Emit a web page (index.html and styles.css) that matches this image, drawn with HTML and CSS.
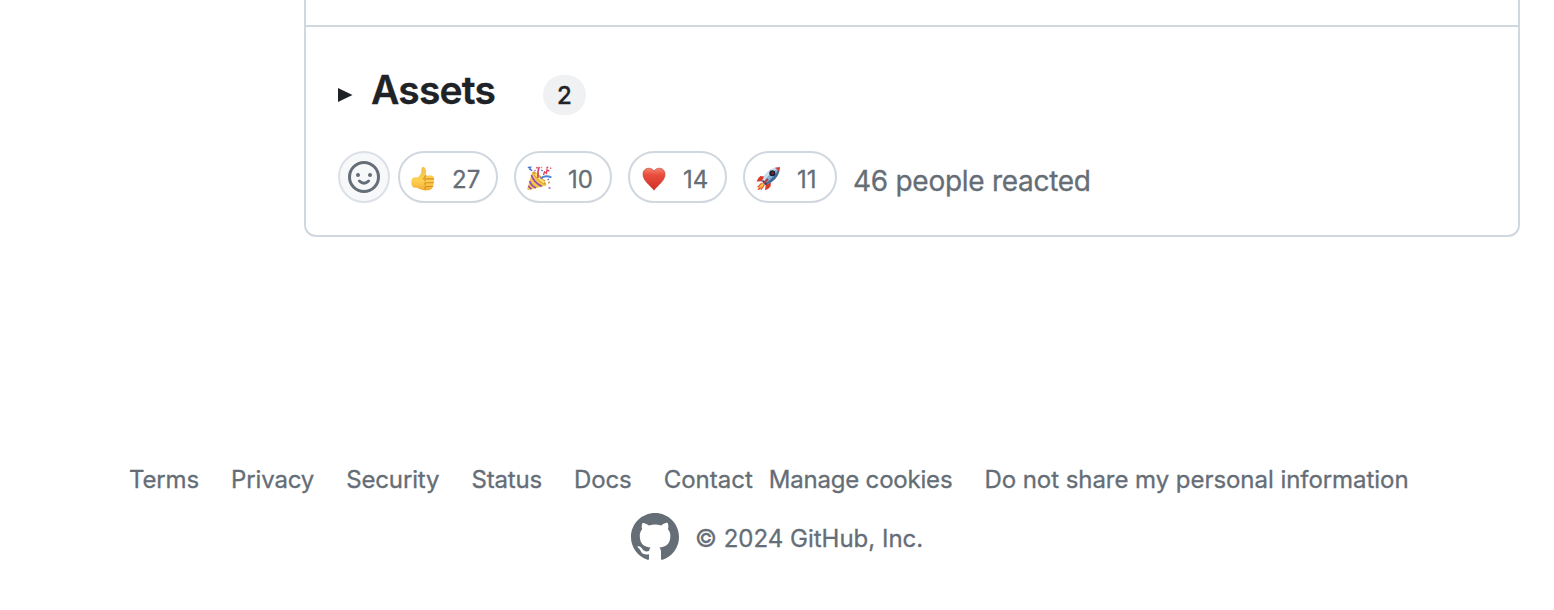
FILE: index.html
```html
<!DOCTYPE html>
<html lang="en">
<head>
<meta charset="utf-8">
<title>Release</title>
<link rel="stylesheet" href="styles.css">
</head>
<body>
<main class="release">
  <div class="release-body"></div>
  <section class="release-footer">
    <div class="assets">
      <svg class="marker" width="15" height="14" viewBox="0 0 15 14"><path d="M0 0v14l14.500-7z" fill="#1f2328"/></svg>
      <h3 class="assets-title">Assets</h3>
      <span class="counter">2</span>
    </div>
    <div class="reactions">
      <button class="add-reaction" aria-label="Add reaction">
        <svg width="32" height="32" viewBox="0 0 16 16" fill="#656d76"><path fill-rule="evenodd" d="M8 0a8 8 0 1 1 0 16A8 8 0 0 1 8 0ZM1.500 8a6.500 6.500 0 1 0 13 0 6.500 6.500 0 0 0-13 0Z"/><circle cx="5" cy="7" r="1"/><circle cx="11" cy="7" r="1"/><path d="M5.700 10Q8 12.200 10.300 10" fill="none" stroke="#656d76" stroke-width="1.450" stroke-linecap="round"/></svg>
      </button>
      <button class="reaction thumbs">
        <svg width="24" height="26" viewBox="0 0 24 26">
          <defs><linearGradient id="hand" x2="0" y2="1"><stop stop-color="#f5c04d"/><stop offset=".6" stop-color="#fed050"/><stop offset="1" stop-color="#efad35"/></linearGradient></defs>
          <path d="M.4 14.500Q.8 12 3 11.600L7 11.200C9 9.500 10.600 7.600 10.300 4.500C10 1.600 11.200.5 12.600 1C15.300 2 15.800 5.800 14.700 9.600H20.700Q23 10 22.700 12.500Q23.400 14.500 22.600 16.500Q22.900 19 21.700 20.200Q22 22.500 20 23.600Q17.500 25 11.500 24Q8 23.200 6 21.800L2.500 21.500Q0 20 .4 14.500Z" fill="url(#hand)"/>
          <path d="M14.700 9.600L12.500 13M22.700 12.900H15.300Q13 13 14.200 15M22.500 16.800H15Q13 17 14.200 18.800M21.800 20.500H15Q13.200 20.800 14.400 23.500" fill="none" stroke="#d98c25" stroke-width="1.100" stroke-linecap="round"/>
        </svg><span>27</span>
      </button>
      <button class="reaction party">
        <svg width="25" height="25" viewBox="0 0 25 25">
          <path d="M6.200 5.300Q15.500 9 19.200 18.500Q19.500 20.500 16.500 20.300L1.600 24Q-.1 24.300.4 22.300L5 6.500Z" fill="#f3c34b"/>
          <path d="M6.200 5.300Q15.500 9 19.200 18.500Q16 18.500 10.500 13.500Q5.800 9 6.200 5.300Z" fill="#d7962d"/>
          <path d="M8.500 7.500Q10.500 12 17.500 16.500" stroke="#f9df72" stroke-width="2.600" fill="none"/>
          <path d="M4.400 9Q6.500 16 14.700 20.500M2.600 15Q4 19.500 9 22M1.200 20L4.500 23.300" fill="none" stroke="#944bb4" stroke-width="1.600"/>
          <path d="M11 12Q10.500 5 12.300 1" fill="none" stroke="#d6436c" stroke-width="1.700"/>
          <path d="M13.500 12.500Q18 8.500 24.500 11.500" fill="none" stroke="#4c82df" stroke-width="1.900"/>
          <path d="M.8 1.500L3.700 1.200L2.800 3.200L5.200 4.700M14.200 4l1.600 1M20.500 14l1.500-1" fill="none" stroke="#4e78cc" stroke-width="1.400"/>
          <path d="M16.500 9L17.500 5.800L19.300 7.200L20 4L22.300 5M19.500 2.500L21 .7M23 1.800l1.300.7M9.200 1.500l1.500.5" fill="none" stroke="#df4560" stroke-width="1.400"/>
          <path d="M21 17l2-1M17 14l1 1M14 1l1 1" stroke="#dda042" stroke-width="1.600"/><path d="M21.500 21.500l2 1M7.500 4l1 1" stroke="#b86acb" stroke-width="1.600"/>
        </svg><span>10</span>
      </button>
      <button class="reaction heart">
        <svg width="24" height="24" viewBox="0 0 24 24"><defs><linearGradient id="heart" x2="0" y2="1"><stop stop-color="#f5866f"/><stop offset=".3" stop-color="#e94e3d"/><stop offset="1" stop-color="#d32f27"/></linearGradient></defs><path d="M12 4.300C10-.3 1-.1 1 7.300C1 14 8 18 12 23.200C16 18 23 14 23 7.300C23-.1 14-.3 12 4.300Z" fill="url(#heart)" stroke="#c4372d" stroke-width=".6"/></svg><span>14</span>
      </button>
      <button class="reaction rocket">
        <svg width="25" height="25" viewBox="0 0 25 25">
          <path d="M9 10.500L4.500 10Q1.500 12 .5 15.500L6.500 15.200ZM15 16.500L14.500 20.500Q12.500 23.300 9 24.300L9.800 18Z" fill="#dd3b29"/>
          <path d="M5.500 16.500L.5 21.500L3 21L1.500 24.300L4.800 23L5 24.500L9 19Z" fill="#f04c2d"/><path d="M6 17L2.500 21.500L4.500 21.200L4.500 23L8 19Z" fill="#fbc53d"/>
          <path d="M23.700 1Q13.500 1.800 8.700 9.600L5.600 15.500L9.200 19.100L15.300 16.300Q23.500 11 23.700 1Z" fill="#86b3d7"/>
          <path d="M23.700 1Q13.500 1.800 8.700 9.600L5.600 15.500L7 17Q12 8 23.700 1Z" fill="#cde0ef"/>
          <path d="M23.700 1Q23.500 11 15.300 16.300L9.200 19.100L8 17.900Q18 13 23.700 1Z" fill="#426996"/>
          <path d="M18.500 1.900Q22 2.500 23 6.400L23.700 1Z" fill="#d7392e"/><circle cx="16.300" cy="7.200" r="3" fill="#171d2c"/><circle cx="16.500" cy="7" r="1.500" fill="#7c2630"/>
          <path d="M6.400 14.500L10.500 18.500" stroke="#303d5a" stroke-width="1.500"/><path d="M7.500 17.400L12 13" stroke="#bd3634" stroke-width="2"/>
        </svg><span>11</span>
      </button>
      <span class="reacted">46 people reacted</span>
    </div>
  </section>
</main>
<footer class="footer">
  <nav class="links">
    <a>Terms</a><a>Privacy</a><a>Security</a><a>Status</a><a>Docs</a><a class="contact">Contact</a><a class="cookies">Manage cookies</a><a class="personal">Do not share my personal information</a>
  </nav>
  <div class="copyright">
    <svg width="48" height="48" viewBox="0 0 16 16" fill="#656d76"><path d="M8 0c4.420 0 8 3.580 8 8a8.013 8.013 0 0 1-5.450 7.590c-.400.080-.550-.170-.550-.380 0-.270.010-1.130.010-2.200 0-.750-.250-1.230-.540-1.480 1.780-.200 3.650-.880 3.650-3.950 0-.880-.310-1.590-.820-2.150.080-.200.360-1.020-.080-2.120 0 0-.670-.220-2.200.820-.640-.180-1.320-.270-2-.270-.680 0-1.360.090-2 .270-1.530-1.030-2.200-.820-2.200-.820-.440 1.100-.160 1.920-.080 2.120-.510.560-.820 1.280-.820 2.150 0 3.060 1.860 3.750 3.640 3.950-.230.200-.440.550-.510 1.070-.460.210-1.610.550-2.330-.660-.150-.240-.600-.830-1.230-.820-.670.010-.270.380.010.530.340.190.730.900.820 1.130.160.450.680 1.310 2.690.940 0 .670.010 1.300.010 1.490 0 .210-.150.450-.550.380A7.995 7.995 0 0 1 0 8c0-4.420 3.580-8 8-8Z"/></svg>
    <span>© 2024 GitHub, Inc.</span>
  </div>
</footer>
</body>
</html>
```
FILE: styles.css
```css
* { box-sizing: border-box; }
body { margin: 0; height: 610px; overflow: hidden; background: #fff; color: #656d76; font-family: Inter, sans-serif; font-size: 24px; -webkit-text-stroke: .3px currentColor; }
.release { width: 1216px; height: 237px; margin-left: 304px; border: 2px solid #d0d7de; border-top: 0; border-radius: 0 0 12px 12px; }
.release-body { height: 27px; border-bottom: 2px solid #d0d7de; }
.release-footer { padding: 43px 32px 0; }
.assets { display: flex; height: 48px; }
.marker { margin-top: 18px; }
.assets-title { margin: 0 0 0 18px; width: 172px; font-size: 39px; line-height: 40px; font-weight: 600; letter-spacing: -.8px; color: #1f2328; }
.counter { width: 43px; height: 40px; margin-top: 5px; border-radius: 20px; background: #eff1f3; color: #1f2328; text-align: center; font-weight: 500; line-height: 41px; }
.reactions { display: flex; margin-top: 33px; height: 52px; }
button { margin: 0; padding: 0; font: inherit; color: inherit; background: #fff; -webkit-text-stroke: inherit; }
.add-reaction { width: 52px; height: 52px; border: 2px solid #dce1e7; border-radius: 50%; background: #f6f8fa; display: flex; align-items: center; justify-content: center; margin-right: 8px; }
.reaction { display: flex; align-items: center; height: 52px; padding-left: 11px; border: 2px solid #d0d7de; border-radius: 26px; margin-right: 16px; }
.reaction svg { flex: none; margin-top: 3px; }
.reaction span { margin-left: 17px; padding-top: 5px; line-height: 30px; }
.thumbs { width: 100px; }
.party { width: 98px; }
.party span, .rocket span { margin-left: 16px; }
.heart { width: 99px; padding-left: 12px; }
.rocket { width: 94px; }
.reacted { font-size: 28px; line-height: 60px; letter-spacing: -.28px; white-space: nowrap; }
.footer { margin-top: 225px; }
.links { display: flex; height: 36px; padding-left: 129px; gap: 32px; line-height: 36px; letter-spacing: -.14px; white-space: nowrap; }
.contact { letter-spacing: 0; }
.cookies { margin-left: -16px; letter-spacing: -.2px; }
.personal { letter-spacing: -.05px; }
.copyright { display: flex; margin: 15px 0 0 631px; line-height: 52px; gap: 16px; white-space: nowrap; }
```
